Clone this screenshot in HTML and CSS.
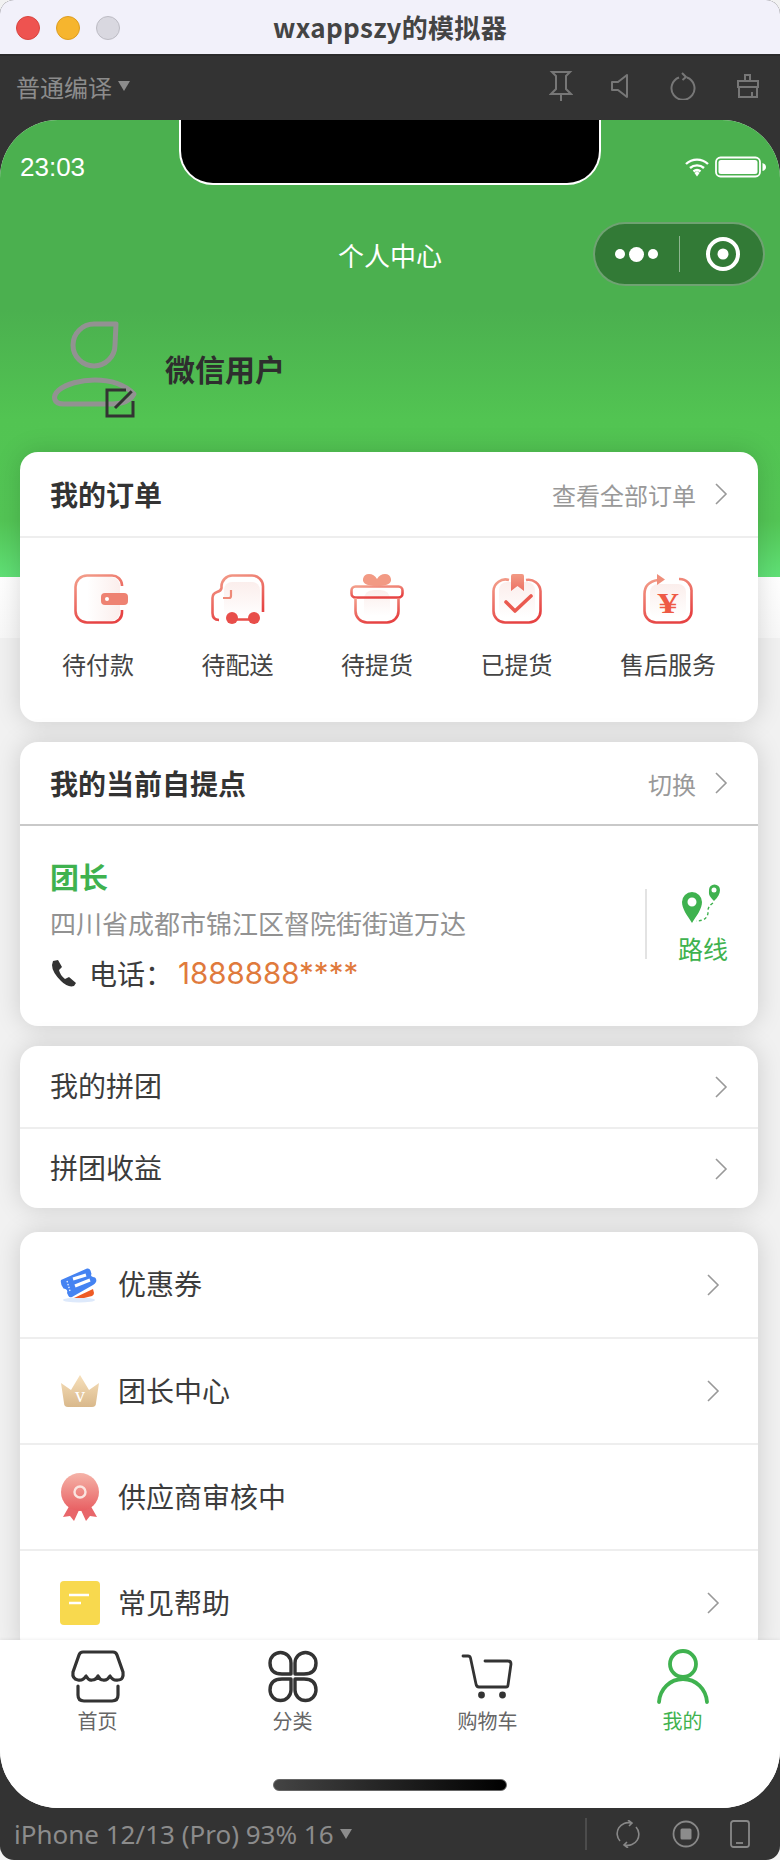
FILE: index.html
```html
<!DOCTYPE html>
<html lang="zh-CN">
<head>
    <meta charset="UTF-8">
    <meta name="viewport" content="width=device-width, initial-scale=1.0">
    <title>wxappszy的模拟器</title>
    <link rel="stylesheet" href="styles.css">
</head>
<body>
    <svg class="defs" aria-hidden="true">
        <defs>
            <linearGradient id="red-line" x1="0" y1="0" x2="0.4" y2="1">
                <stop offset="0" stop-color="#f3a08c"/>
                <stop offset="1" stop-color="#e64343"/>
            </linearGradient>
            <linearGradient id="red-pale" x1="0" y1="0" x2="0" y2="1">
                <stop offset="0" stop-color="#fbeeec"/>
                <stop offset="1" stop-color="#ffffff"/>
            </linearGradient>
            <linearGradient id="red-side" x1="0" y1="0" x2="1" y2="0">
                <stop offset="0" stop-color="#ffffff"/>
                <stop offset="1" stop-color="#fbeeec"/>
            </linearGradient>
            <linearGradient id="red-solid" x1="0" y1="0" x2="0" y2="1">
                <stop offset="0" stop-color="#f29a84"/>
                <stop offset="1" stop-color="#ec7164"/>
            </linearGradient>
            <linearGradient id="gold" x1="0" y1="0" x2="0" y2="1">
                <stop offset="0" stop-color="#f7e0bb"/>
                <stop offset="1" stop-color="#d9b88b"/>
            </linearGradient>
            <linearGradient id="medal" x1="0" y1="0" x2="0" y2="1">
                <stop offset="0" stop-color="#f5b3a8"/>
                <stop offset="1" stop-color="#e85f62"/>
            </linearGradient>
        </defs>
    </svg>

    <div class="window">
        <header class="titlebar">
            <div class="lights">
                <span class="light light-red"></span>
                <span class="light light-yellow"></span>
                <span class="light light-gray"></span>
            </div>
            <h1 class="window-title">wxappszy的模拟器</h1>
        </header>

        <div class="toolbar">
            <span class="compile">普通编译<i class="caret"></i></span>
            <div class="tool-icons">
                <svg class="tool-pin" width="24" height="32" viewBox="0 0 24 32"><path d="M3 2 H21 L17 6 V19 L22 24 H2 L7 19 V6 Z M12 24 V31" fill="none" stroke="#777" stroke-width="2"/></svg>
                <svg class="tool-sound" width="20" height="26" viewBox="0 0 20 26"><path d="M17 2 L8 9 H2 V17 H8 L17 24 Z" fill="none" stroke="#777" stroke-width="2" stroke-linejoin="round"/></svg>
                <svg class="tool-reload" width="26" height="28" viewBox="0 0 26 28"><path d="M17 5.500 A11.500 11.500 0 1 1 9 5.500 M12 1 L16 5 L12.500 8" fill="none" stroke="#777" stroke-width="2"/></svg>
                <svg class="tool-clean" width="24" height="26" viewBox="0 0 24 26"><path d="M9 8 V2 H14 V8 M2 8 H22 V14 H2 Z M3 14 V24 H21 V14 M16 24 V19" fill="none" stroke="#777" stroke-width="2"/></svg>
            </div>
        </div>

        <div class="screen">
            <div class="notch"></div>

            <main class="page">
                <div class="statusbar">
                    <span class="time">23:03</span>
                    <div class="status-icons">
                        <svg width="26" height="20" viewBox="0 0 26 20"><path d="M2 7 A16 16 0 0 1 24 7 M6 11 A10.500 10.500 0 0 1 20 11 M9.500 14.500 A5.500 5.500 0 0 1 16.500 14.500" fill="none" stroke="#fff" stroke-width="2.400"/><path d="M10.500 16 L13 14 L15.500 16 L13 19.500 Z" fill="#fff"/></svg>
                        <svg width="52" height="22" viewBox="0 0 52 22"><rect x="1" y="1.500" width="44" height="19" rx="4.500" fill="none" stroke="#fff" stroke-width="1.800"/><rect x="3.500" y="4" width="39" height="14" rx="2.500" fill="#fff"/><path d="M47.500 7 Q51 8 51 11 Q51 14 47.500 15 Z" fill="#fff"/></svg>
                    </div>
                </div>

                <div class="navbar">
                    <span class="nav-title">个人中心</span>
                    <div class="capsule">
                        <div class="capsule-dots"><i></i><i class="dot-big"></i><i></i></div>
                        <span class="capsule-line"></span>
                        <svg width="36" height="36" viewBox="0 0 36 36"><circle cx="18" cy="18" r="15" fill="none" stroke="#fff" stroke-width="4"/><circle cx="18" cy="18" r="5.500" fill="#fff"/></svg>
                    </div>
                </div>

                <section class="profile">
                    <svg class="avatar" width="90" height="100" viewBox="0 0 90 100">
                        <g fill="none" stroke="#929292" stroke-width="5">
                            <path d="M66 6 H44 A21 21 0 1 0 65 27 Z" stroke-linejoin="round"/>
                            <path d="M14 86 C3 86 2 78 9 72 C24 60 64 56 84 76 C80 83 74 86 62 86 Z" stroke-linejoin="round"/>
                        </g>
                        <path d="M76 72 H57 V98 H83 V83 M81.700 73.300 L65 90" fill="none" stroke="#333" stroke-width="3"/>
                    </svg>
                    <span class="nickname">微信用户</span>
                </section>

                <section class="card orders">
                    <div class="card-head">
                        <span class="card-title">我的订单</span>
                        <span class="card-more">查看全部订单<svg class="arrow" width="14" height="24" viewBox="0 0 14 24"><path d="M2 2 L12 12 L2 22" fill="none" stroke="#999" stroke-width="1.600"/></svg></span>
                    </div>
                    <div class="order-list">
                        <div class="order-item item-shift">
                            <svg width="54" height="50" viewBox="0 0 54 50">
                                <rect x="13" y="3" width="33" height="44" rx="9" fill="url(#red-side)"/>
                                <path d="M48 12 V11 A10 10 0 0 0 38 1.500 H13 A11.500 11.500 0 0 0 1.500 13 V37 A11.500 11.500 0 0 0 13 48.500 H38 A10 10 0 0 0 48 38 V36" fill="none" stroke="url(#red-line)" stroke-width="2.600"/>
                                <rect x="27" y="19" width="27" height="12" rx="4" fill="#ee8272"/>
                                <circle cx="33" cy="25" r="2" fill="#fff"/>
                            </svg>
                            <span>待付款</span>
                        </div>
                        <div class="order-item">
                            <svg width="54" height="50" viewBox="0 0 54 50">
                                <rect x="13" y="8" width="36" height="36" rx="8" fill="url(#red-pale)"/>
                                <path d="M52 38 V13 A11 11 0 0 0 41 1.500 H21 A11 11 0 0 0 10.500 12 V14 Q10 17 6 18 Q1.500 19.500 1.500 24 V39 Q1.500 46 8 46" fill="none" stroke="url(#red-line)" stroke-width="2.600"/>
                                <path d="M20 16 V22 Q20 24 18 24 H12" fill="none" stroke="#ee8a78" stroke-width="2.200"/>
                                <circle cx="21" cy="44" r="6" fill="#e84e4a"/>
                                <circle cx="43" cy="44" r="6" fill="#e84e4a"/>
                                <path d="M24 45.500 H40" stroke="#e84e4a" stroke-width="2.600"/>
                            </svg>
                            <span>待配送</span>
                        </div>
                        <div class="order-item">
                            <svg width="54" height="50" viewBox="0 0 54 50">
                                <path d="M27 12 Q12 12 13 5 Q14 0 19 0 Q24 0 27 5 Q30 0 35 0 Q40 0 41 5 Q42 12 27 12 Z" fill="#f29a84"/>
                                <path d="M14 26 Q14 16 24 16 H30 Q40 16 40 26 V42 H14 Z" fill="url(#red-pale)"/>
                                <rect x="1.500" y="12.500" width="51" height="11" rx="4" fill="none" stroke="url(#red-line)" stroke-width="2.600"/>
                                <path d="M5.500 24 V37 A11.500 11.500 0 0 0 17 48.500 H37 A11.500 11.500 0 0 0 48.500 37 V24" fill="none" stroke="url(#red-line)" stroke-width="2.600"/>
                            </svg>
                            <span>待提货</span>
                        </div>
                        <div class="order-item">
                            <svg width="50" height="50" viewBox="0 0 50 50">
                                <rect x="7" y="8" width="36" height="36" rx="8" fill="url(#red-pale)"/>
                                <path d="M17 6 A12 12 0 0 0 1.500 17 V37 A11.500 11.500 0 0 0 13 48.500 H37 A11.500 11.500 0 0 0 48.500 37 V17 A12 12 0 0 0 34 6" fill="none" stroke="url(#red-line)" stroke-width="2.600"/>
                                <path d="M19 2 Q19 0 21 0 H30 Q32 0 32 2 V17 L25.500 12 L19 17 Z" fill="url(#red-solid)"/>
                                <path d="M14 28 L23 37 L39 22" fill="none" stroke="#ea5a50" stroke-width="3.600" stroke-linecap="round" stroke-linejoin="round"/>
                            </svg>
                            <span>已提货</span>
                        </div>
                        <div class="order-item item-wide">
                            <svg width="50" height="50" viewBox="0 0 50 50">
                                <rect x="7" y="10" width="36" height="34" rx="8" fill="url(#red-pale)"/>
                                <path d="M15 6 Q1.500 8 1.500 20 V37 A11.500 11.500 0 0 0 13 48.500 H37 A11.500 11.500 0 0 0 48.500 37 V18 A12 12 0 0 0 36 5" fill="none" stroke="url(#red-line)" stroke-width="2.600"/>
                                <path d="M14 0 L22 5.500 L14 11 Z" fill="#ef8e7a"/>
                                <text class="yen" transform="translate(25 39) scale(1.400 1)" text-anchor="middle">¥</text>
                            </svg>
                            <span>售后服务</span>
                        </div>
                    </div>
                </section>

                <section class="card pickup">
                    <div class="card-head head-strong">
                        <span class="card-title">我的当前自提点</span>
                        <span class="card-more">切换<svg class="arrow" width="14" height="24" viewBox="0 0 14 24"><path d="M2 2 L12 12 L2 22" fill="none" stroke="#999" stroke-width="1.600"/></svg></span>
                    </div>
                    <div class="pickup-body">
                        <div class="pickup-info">
                            <p class="leader">团长</p>
                            <p class="address">四川省成都市锦江区督院街街道万达</p>
                            <p class="phone">
                                <svg width="28" height="28" viewBox="0 0 28 28"><path d="M3 2 L8 1 L12 8 L9 11 Q10 16 15 20 L19 18 L26 24 L24 27 Q18 29 11 22 Q2 13 2 6 Z" fill="#333"/></svg>
                                <span>电话：</span><span class="phone-num">1888888****</span>
                            </p>
                        </div>
                        <div class="route">
                            <svg width="44" height="40" viewBox="0 0 44 40">
                                <path d="M11 40 C6 32 1 26 1 19 A10 10 0 0 1 21 19 C21 26 16 32 11 40 Z M11 14.500 A4.500 4.500 0 1 0 11 23.500 A4.500 4.500 0 1 0 11 14.500 Z" fill="#3fb24f" fill-rule="evenodd"/>
                                <path d="M33 19 C27 13 28 12 28 8 A5.500 5.500 0 0 1 39 8 C39 12 37 15 33 19 Z M33 5.500 A2.500 2.500 0 1 0 33 10.500 A2.500 2.500 0 1 0 33 5.500 Z" fill="#3fb24f" fill-rule="evenodd" transform="translate(0 -1)"/>
                                <path d="M32 20 Q26 24 27 30 Q26 38 15 38" fill="none" stroke="#3fb24f" stroke-width="1.400" stroke-dasharray="3 2.500"/>
                            </svg>
                            <span>路线</span>
                        </div>
                    </div>
                </section>

                <section class="card">
                    <div class="row row-plain">
                        <span>我的拼团</span>
                        <svg class="arrow" width="14" height="24" viewBox="0 0 14 24"><path d="M2 2 L12 12 L2 22" fill="none" stroke="#999" stroke-width="1.600"/></svg>
                    </div>
                    <div class="row row-plain">
                        <span>拼团收益</span>
                        <svg class="arrow" width="14" height="24" viewBox="0 0 14 24"><path d="M2 2 L12 12 L2 22" fill="none" stroke="#999" stroke-width="1.600"/></svg>
                    </div>
                </section>

                <section class="card menu">
                    <div class="row row-icon">
                        <svg width="40" height="36" viewBox="0 0 40 36">
                            <ellipse cx="19" cy="33" rx="16" ry="2.500" fill="#dde9fb"/>
                            <path d="M14 31 L33 22 L34 26 Q34 28 32 29 L24 31 Z" fill="#ee5a24"/>
                            <path d="M1 13 L27 1.500 Q29.500 1 30.500 3.500 L31.500 7 Q30 9 33 10 L35 10.500 Q37 12 36 15 Q35 17 33 18 L12 30 Q9.500 31 8.500 29 L7 26 Q8 23 5.500 22 L3.500 21.500 Q0 17 1 13 Z" fill="#4583f2"/>
                            <path d="M13 12 L26 8 M15 19 L30 13" stroke="#fff" stroke-width="3"/>
                            <path d="M7 14 L10 24" stroke="#fff" stroke-width="1.200" stroke-dasharray="1.500 1.500"/>
                        </svg>
                        <span class="row-text">优惠券</span>
                        <svg class="arrow" width="14" height="24" viewBox="0 0 14 24"><path d="M2 2 L12 12 L2 22" fill="none" stroke="#999" stroke-width="1.600"/></svg>
                    </div>
                    <div class="row row-icon">
                        <svg width="40" height="34" viewBox="0 0 40 34">
                            <path d="M1 9 L11 16 L20 1 L29 16 L39 9 L36 29 Q36 33 32 33 H8 Q4 33 4 29 Z" fill="url(#gold)"/>
                            <text class="crown-v" x="20" y="28" text-anchor="middle">v</text>
                        </svg>
                        <span class="row-text">团长中心</span>
                        <svg class="arrow" width="14" height="24" viewBox="0 0 14 24"><path d="M2 2 L12 12 L2 22" fill="none" stroke="#999" stroke-width="1.600"/></svg>
                    </div>
                    <div class="row row-icon">
                        <svg width="40" height="48" viewBox="0 0 40 48">
                            <path d="M11 30 L3 44 L10 43 L14 48 L20 35 L26 48 L30 43 L37 44 L29 30 Z" fill="#e8666a"/>
                            <circle cx="20" cy="19" r="19" fill="url(#medal)"/>
                            <circle cx="20" cy="19" r="5.500" fill="none" stroke="#fbe4e0" stroke-width="2.400"/>
                        </svg>
                        <span class="row-text">供应商审核中</span>
                    </div>
                    <div class="row row-icon">
                        <svg width="40" height="44" viewBox="0 0 40 44">
                            <rect width="40" height="44" rx="4" fill="#f8d94e"/>
                            <path d="M9 14 H29 M9 22 H21" stroke="#fff" stroke-width="2.600"/>
                        </svg>
                        <span class="row-text">常见帮助</span>
                        <svg class="arrow" width="14" height="24" viewBox="0 0 14 24"><path d="M2 2 L12 12 L2 22" fill="none" stroke="#999" stroke-width="1.600"/></svg>
                    </div>
                </section>
            </main>

            <nav class="tabbar">
                <div class="tabs">
                    <div class="tab">
                        <svg width="56" height="56" viewBox="0 0 56 56">
                            <path d="M13 4 H43 Q46 4 47 7 L53 24 Q54 32 48 32 Q43 33 40 28 Q37 33 33 32 Q30 32 28 28 Q26 32 22 32 Q19 33 16 28 Q13 33 8 32 Q2 31 3 24 L9 7 Q10 4 13 4 Z M8 38 V47 Q8 53 14 53 H42 Q48 53 48 47 V38" fill="none" stroke="#333" stroke-width="3.200" stroke-linejoin="round" stroke-linecap="round"/>
                        </svg>
                        <span>首页</span>
                    </div>
                    <div class="tab">
                        <svg width="56" height="56" viewBox="0 0 56 56">
                            <g fill="none" stroke="#333" stroke-width="3.400" stroke-linejoin="round">
                                <path d="M26 26 H17 Q5 26 5 15 A10.500 10.500 0 0 1 26 15 Z"/>
                                <path d="M30 26 H39 Q51 26 51 15 A10.500 10.500 0 0 0 30 15 Z"/>
                                <path d="M26 31 H17 Q5 31 5 42 A10.500 10.500 0 0 0 26 42 Z"/>
                                <path d="M30 31 H39 Q51 31 51 42 A10.500 10.500 0 0 1 30 42 Z"/>
                            </g>
                        </svg>
                        <span>分类</span>
                    </div>
                    <div class="tab">
                        <svg width="56" height="56" viewBox="0 0 56 56">
                            <path d="M3 8 H8 Q10 8 10.500 10 L16 36 Q16.500 39 19 39 H46 Q48 39 48 37 L51 16 Q51 13 48 13 H25" fill="none" stroke="#333" stroke-width="2.800" stroke-linecap="round"/>
                            <circle cx="21.500" cy="47" r="3.400" fill="#333"/>
                            <circle cx="42.500" cy="47" r="3.400" fill="#333"/>
                        </svg>
                        <span>购物车</span>
                    </div>
                    <div class="tab tab-on">
                        <svg width="56" height="56" viewBox="0 0 56 56">
                            <g fill="none" stroke="#3fb24f" stroke-width="3.800" stroke-linecap="round">
                                <ellipse cx="28" cy="16" rx="13" ry="13"/>
                                <path d="M4 54 C5 41 15 31 28 31 C41 31 51 41 52 54"/>
                            </g>
                        </svg>
                        <span>我的</span>
                    </div>
                </div>
                <div class="home-bar"></div>
            </nav>
        </div>

        <footer class="devicebar">
            <span class="device-name">iPhone 12/13 (Pro) 93% 16<i class="caret"></i></span>
            <div class="device-icons">
                <svg width="28" height="28" viewBox="0 0 28 28"><path d="M6 21 A11 11 0 0 1 17 3 M22 7 A11 11 0 0 1 11 25 M14 0 L18 3 L15 6 M14 28 L10 25 L13 22" fill="none" stroke="#888" stroke-width="1.600"/></svg>
                <svg width="28" height="28" viewBox="0 0 28 28"><circle cx="14" cy="14" r="12.500" fill="none" stroke="#888" stroke-width="1.800"/><rect x="8.500" y="8.500" width="11" height="11" rx="1.500" fill="#8c8c8c"/></svg>
                <svg width="20" height="28" viewBox="0 0 20 28"><rect x="1" y="1" width="18" height="26" rx="2.500" fill="none" stroke="#888" stroke-width="1.800"/><path d="M6 23 H13" stroke="#888" stroke-width="1.800"/></svg>
            </div>
        </footer>
    </div>
</body>
</html>
```

FILE: styles.css
```css
body {
    margin: 0;
    background: #f2f2f2;
    font-family: "Noto Sans CJK SC", "Liberation Sans", sans-serif;
    color: #333;
}
p {
    margin: 0;
}
.defs {
    position: absolute;
    width: 0;
    height: 0;
}
.window {
    width: 780px;
    height: 1860px;
    display: flex;
    flex-direction: column;
    background: #333;
    border-radius: 14px;
    overflow: hidden;
}

/* mac title bar */
.titlebar {
    height: 56px;
    flex: none;
    background: #f2f1fa;
    border-bottom: 2px solid #2b2b2b;
    box-sizing: border-box;
    display: flex;
    align-items: center;
    justify-content: center;
    position: relative;
}
.lights {
    position: absolute;
    left: 16px;
    top: 16px;
    display: flex;
    gap: 16px;
}
.light {
    width: 24px;
    height: 24px;
    border-radius: 50%;
    box-sizing: border-box;
}
.light-red {
    background: #ee5350;
    border: 1px solid #d9453f;
}
.light-yellow {
    background: #f6b52e;
    border: 1px solid #dd9d20;
}
.light-gray {
    background: #d9d8e0;
    border: 1px solid #bdbcc4;
}
.window-title {
    margin: 0;
    font-size: 26px;
    font-weight: 700;
    letter-spacing: 0.3px;
    color: #444;
    line-height: 1;
}

.toolbar {
    height: 64px;
    flex: none;
    display: flex;
    align-items: center;
    justify-content: space-between;
    padding: 0 20px 4px 16px;
    box-sizing: border-box;
}
.compile {
    font-size: 24px;
    color: #8c8c8c;
    display: flex;
    align-items: center;
}
.caret {
    display: inline-block;
    margin-left: 6px;
    border-left: 6px solid transparent;
    border-right: 6px solid transparent;
    border-top: 10px solid #8c8c8c;
}
.tool-icons {
    display: flex;
    align-items: center;
    gap: 40px;
}
.tool-sound {
    margin-left: -3px;
}

/* phone screen */
.screen {
    height: 1688px;
    flex: none;
    display: flex;
    flex-direction: column;
    position: relative;
    border-radius: 58px;
    overflow: hidden;
    background: #fff;
}
.notch {
    position: absolute;
    top: 0;
    left: 179px;
    width: 422px;
    height: 65px;
    box-sizing: border-box;
    background: #000;
    border: 2px solid #fff;
    border-top: none;
    border-radius: 0 0 34px 34px;
    z-index: 2;
}
.page {
    height: 1520px;
    flex: none;
    overflow: hidden;
    background: linear-gradient(#4bb04f 0, #4bb04f 190px, #52c452 300px, #53c555 400px, #60e076 457px, #fff 457px, #f8f8f8 518px, #f1f1f1 518px);
}
.statusbar {
    height: 94px;
    display: flex;
    align-items: center;
    justify-content: space-between;
    padding: 0 13px 0 20px;
    box-sizing: border-box;
}
.time {
    font-family: "Liberation Sans", sans-serif;
    font-size: 26px;
    color: #fff;
}
.status-icons {
    display: flex;
    align-items: center;
    gap: 5px;
}
.navbar {
    height: 80px;
    position: relative;
    display: flex;
    align-items: center;
    justify-content: center;
}
.nav-title {
    font-size: 26px;
    color: #fff;
}
.capsule {
    position: absolute;
    right: 15px;
    top: 8px;
    width: 172px;
    height: 64px;
    box-sizing: border-box;
    background: #327a36;
    border: 2px solid rgba(255, 255, 255, 0.3);
    border-radius: 32px;
    display: flex;
    align-items: center;
    padding-left: 20px;
}
.capsule-dots {
    display: flex;
    align-items: center;
    gap: 4px;
    width: 65px;
}
.capsule-dots i {
    width: 10px;
    height: 10px;
    border-radius: 50%;
    background: #fff;
}
.capsule-dots .dot-big {
    width: 15px;
    height: 15px;
}
.capsule-line {
    width: 1px;
    height: 36px;
    background: rgba(255, 255, 255, 0.45);
    margin: 0 25px 0 -1px;
}

.profile {
    height: 158px;
    box-sizing: border-box;
    padding: 24px 0 0 50px;
    display: flex;
    align-items: flex-start;
}
.avatar {
    display: block;
}
.nickname {
    font-size: 30px;
    font-weight: 700;
    color: #2e2e2e;
    margin: 28px 0 0 25px;
}

/* cards */
.card {
    width: 738px;
    margin: 0 0 20px 20px;
    background: #fff;
    border-radius: 18px;
    box-shadow: 0 0 26px rgba(0, 0, 0, 0.15);
    overflow: hidden;
}
.card-head {
    height: 86px;
    box-sizing: border-box;
    padding: 0 30px;
    border-bottom: 2px solid #eee;
    display: flex;
    align-items: center;
    justify-content: space-between;
}
.head-strong {
    height: 84px;
    border-bottom-color: #c9c9c9;
}
.card-title {
    font-size: 28px;
    font-weight: 700;
    color: #333;
}
.card-more {
    font-size: 24px;
    color: #999;
    display: flex;
    align-items: center;
    gap: 18px;
}
.arrow {
    display: block;
    flex: none;
}
.order-list {
    height: 184px;
    box-sizing: border-box;
    padding: 36px 42px 0;
    display: flex;
    justify-content: space-between;
}
.order-item {
    width: 72px;
    display: flex;
    flex-direction: column;
    align-items: center;
    gap: 23px;
    font-size: 24px;
    line-height: 34px;
    color: #444;
}
.item-wide {
    width: 96px;
    white-space: nowrap;
}
.item-shift svg {
    margin-left: 5px;
}
.yen {
    font-family: "Liberation Serif", serif;
    font-size: 30px;
    font-weight: 700;
    fill: #ee5a45;
}

.pickup-body {
    height: 200px;
    box-sizing: border-box;
    display: flex;
    align-items: center;
    justify-content: space-between;
    padding: 0 30px;
}
.pickup-info {
    display: flex;
    flex-direction: column;
    gap: 6px;
    margin-top: -2px;
}
.leader {
    font-size: 29px;
    font-weight: 700;
    line-height: 42px;
    margin-top: -2px;
    color: #3fb24f;
}
.address {
    font-size: 26px;
    line-height: 40px;
    color: #929292;
}
.phone {
    display: flex;
    align-items: center;
    margin-top: 3px;
    font-size: 28px;
    line-height: 42px;
    color: #3c3c3c;
}
.phone svg {
    margin-right: 11px;
}
.phone-num {
    font-family: "Inter", "Liberation Sans", sans-serif;
    font-size: 29.5px;
    color: #e07a3c;
    margin-left: 5px;
}
.route {
    width: 81px;
    height: 70px;
    margin-top: -4px;
    border-left: 2px solid #e3e3e3;
    display: flex;
    flex-direction: column;
    align-items: flex-end;
    font-size: 25px;
    line-height: 34px;
    color: #3fb24f;
}
.route svg {
    flex: none;
    margin: -6px 3px 8px 0;
}

.row {
    display: flex;
    align-items: center;
    box-sizing: border-box;
    border-top: 2px solid #eee;
    font-size: 28px;
    color: #3c3c3c;
}
.row:first-child {
    border-top: none;
}
.row-plain {
    height: 81px;
    padding: 0 30px;
    justify-content: space-between;
}
.row span {
    padding-bottom: 3px;
}
.menu {
    margin-top: 24px;
}
.row-icon {
    height: 106px;
    padding: 0 38px 0 40px;
}
.row-icon:first-child {
    height: 105px;
}
.row-text {
    margin-left: 18px;
    flex: 1;
}
.crown-v {
    font-family: "Liberation Serif", serif;
    font-size: 20px;
    fill: #fff;
}

/* tab bar */
.tabbar {
    flex: 1;
    position: relative;
    background: #fff;
    box-shadow: 0 -1px 3px rgba(0, 0, 0, 0.06);
}
.tabs {
    display: grid;
    grid-template-columns: repeat(4, 1fr);
    padding-top: 8px;
}
.tab {
    display: flex;
    flex-direction: column;
    align-items: center;
    font-size: 20px;
    line-height: 26px;
    color: #666;
}
.tab span {
    margin-top: 4px;
}
.tab-on {
    color: #3fb24f;
}
.home-bar {
    width: 234px;
    height: 12px;
    margin: 45px auto 0;
    border-radius: 6px;
    box-sizing: border-box;
    border: 1px solid #666;
    background: linear-gradient(90deg, #444, #000);
}

.devicebar {
    flex: 1;
    display: flex;
    align-items: center;
    justify-content: space-between;
    padding: 0 30px 0 14px;
}
.device-name {
    font-family: "Noto Sans", "Liberation Sans", sans-serif;
    font-size: 26px;
    color: #8c8c8c;
    display: flex;
    align-items: center;
}
.device-icons {
    display: flex;
    align-items: center;
    gap: 30px;
    height: 32px;
    padding-left: 27px;
    border-left: 2px solid #4c4c4c;
}
```
